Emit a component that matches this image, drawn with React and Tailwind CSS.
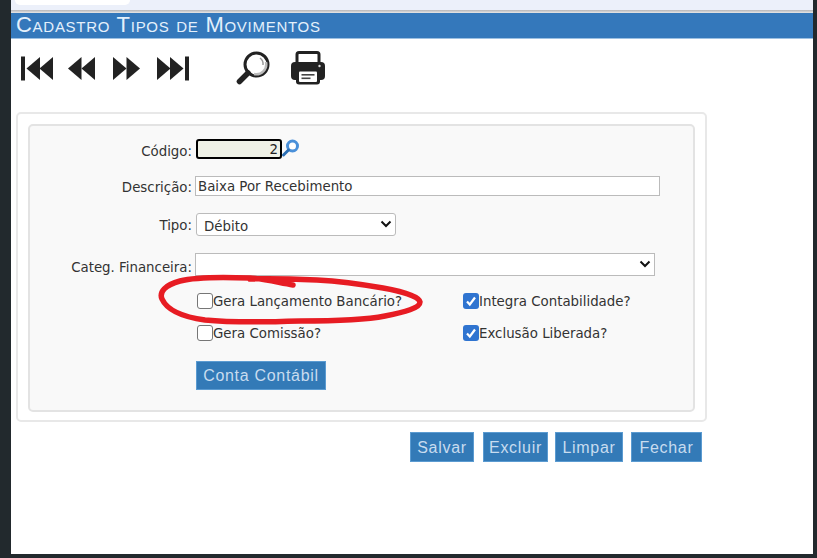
import React from "react";

const Tri = ({ x, dir }) => (
  <polygon points={dir > 0 ? `${x},1 ${x + 13.5},12.5 ${x},24` : `${x + 13.5},1 ${x},12.5 ${x + 13.5},24`} fill="#222" />
);

const Nav = ({ children, w }) => (
  <svg width={w} height="25" viewBox={`0 0 ${w} 25`}>{children}</svg>
);

const Row = ({ label, children, className, labelClass }) => (
  <div className={`flex items-center ${className}`}>
    <label className={`w-[165px] text-right pr-[3px] text-[#333] ${labelClass}`}>{label}</label>
    {children}
  </div>
);

const Box = ({ checked, label }) => (
  <label className="flex items-center h-[16px]">
    {checked ? (
      <span className="w-[16px] h-[16px] rounded-[3px] bg-[#2f74d0] flex items-center justify-center">
        <svg width="12" height="12" viewBox="0 0 12 12"><path d="M2 6.5 L4.8 9.5 L10 2.5" stroke="#fff" strokeWidth="2.2" fill="none" /></svg>
      </span>
    ) : (
      <span className="w-[16px] h-[16px] rounded-[3px] bg-white border border-[#767676]" />
    )}
    <span className="text-[#333] pt-[2px]">{label}</span>
  </label>
);

const Btn = ({ children, className }) => (
  <button className={`bg-[#337ab7] border border-[#5b9bd1] text-[#c8dcef] text-[16px] tracking-[0.7px] pt-[1px] font-['Liberation_Sans',sans-serif] ${className}`}>
    {children}
  </button>
);

const Chevron = () => (
  <svg className="absolute right-[3px] top-1/2 -translate-y-1/2" width="12" height="8" viewBox="0 0 12 8">
    <path d="M1.5 1.5 L6 6 L10.5 1.5" stroke="#111" strokeWidth="2" fill="none" />
  </svg>
);

export default function App() {
  return (
    <div className="relative w-[817px] h-[558px] overflow-hidden bg-[#22292d] pl-[11px] pr-[4px] pb-[4px] font-['DejaVu_Sans',sans-serif] text-[13.35px]">
      <div className="h-full bg-white flex flex-col">
        <div className="h-[10px] bg-[#ecf0fa] relative shrink-0">
          <div className="absolute left-[4px] top-0 w-[115px] h-[5px] bg-white rounded-b-[8px]" />
        </div>
        <div className="h-[3px] shrink-0 bg-gradient-to-b from-[#b5b5b8] to-[#e8e8e8]" />
        <div className="h-[26px] shrink-0 bg-[#3478bb] border-b border-[#9cc0e2] pl-[5px] text-[22px] tracking-[0.72px] leading-[24px] text-[#e4f0fb] font-['Liberation_Sans',sans-serif] [font-variant:small-caps] whitespace-nowrap">
          Cadastro Tipos de Movimentos
        </div>

        <div className="flex items-center h-[36px] mt-[11px] pl-[10px] shrink-0">
          <Nav w={32}>
            <rect x="0" y="0.5" width="4" height="24" fill="#222" />
            <Tri x={5.5} dir={-1} />
            <Tri x={18.5} dir={-1} />
          </Nav>
          <div className="w-[15px]" />
          <Nav w={27}>
            <Tri x={0} dir={-1} />
            <Tri x={13.5} dir={-1} />
          </Nav>
          <div className="w-[18px]" />
          <Nav w={27}>
            <Tri x={0} dir={1} />
            <Tri x={13.5} dir={1} />
          </Nav>
          <div className="w-[17px]" />
          <Nav w={32}>
            <Tri x={0} dir={1} />
            <Tri x={13} dir={1} />
            <rect x="28" y="0.5" width="4" height="24" fill="#222" />
          </Nav>
          <div className="w-[47px]" />
          <svg width="34" height="34" viewBox="0 0 34 34">
            <circle cx="20.5" cy="13.5" r="11.5" fill="#fff" stroke="#222" strokeWidth="3" />
            <path d="M18 23 A10 10 0 0 0 30 11" stroke="#bbb" strokeWidth="2.5" fill="none" />
            <path d="M24 7 A7.5 7.5 0 0 1 27 14" stroke="#999" strokeWidth="1.5" fill="none" />
            <path d="M12 22 L3.5 30.5" stroke="#222" strokeWidth="5.5" strokeLinecap="round" />
          </svg>
          <div className="w-[21px]" />
          <svg width="34" height="34" viewBox="0 0 34 34">
            <rect x="6" y="1.5" width="22" height="13" rx="2" fill="#fff" stroke="#222" strokeWidth="3" />
            <rect x="0" y="11" width="34" height="18" rx="4" fill="#222" />
            <circle cx="28.5" cy="15" r="1.2" fill="#ddd" />
            <rect x="5" y="18" width="24" height="15.5" rx="3" fill="#222" />
            <rect x="8" y="20.5" width="18" height="10.5" rx="1" fill="#fff" />
            <rect x="10.5" y="23" width="13" height="1.6" fill="#444" />
            <rect x="10.5" y="26.5" width="9" height="1.6" fill="#444" />
          </svg>
        </div>

        <div className="ml-[5px] mt-[26px] w-[691px] h-[310px] shrink-0 rounded-[5px] border-2 border-[#e8e8e8] p-[10px]">
          <div className="relative h-[288px] rounded-[5px] border-2 border-[#e3e3e3] bg-[#f9f9f9]">
            <Row label="Código:" className="pt-[13px] h-[33px]" labelClass="pt-[5px]">
              <input readOnly value="2" className="w-[86px] h-[20px] ml-[1px] rounded-[3px] border-2 border-black bg-[#eff1e6] text-right pr-[2px] pt-[2px] text-[#222]" />
              <svg width="20" height="20" viewBox="0 0 20 20" className="-mt-[3px] -ml-[1px]">
                <circle cx="11.5" cy="8" r="5" fill="#fff" stroke="#4a90d9" strokeWidth="3" />
                <path d="M7.5 12 L2.5 17" stroke="#2c6fb5" strokeWidth="3" strokeLinecap="round" />
              </svg>
            </Row>
            <Row label="Descrição:" className="mt-[17px] h-[20px]" labelClass="pt-[4px]">
              <input readOnly value="Baixa Por Recebimento" className="w-[465px] h-[20px] border border-[#bbb] bg-white px-[2px] pt-[2px] text-[#333]" />
            </Row>
            <Row label="Tipo:" className="mt-[16px] h-[24px]" labelClass="pt-[4px]">
              <div className="relative w-[200px] h-[23px] ml-[1px] rounded-[3px] border border-[#bbb] bg-white pl-[7px] pt-[2px] leading-[21px] text-[#333]">
                Débito
                <Chevron />
              </div>
            </Row>
            <Row label="Categ. Financeira:" className="mt-[16px] h-[24px]" labelClass="pt-[8px]">
              <div className="relative w-[460px] h-[23px] border border-[#bbb] bg-white">
                <Chevron />
              </div>
            </Row>
            <div className="flex mt-[17px] ml-[167px]">
              <div className="w-[266px]"><Box label="Gera Lançamento Bancário?" /></div>
              <Box checked label="Integra Contabilidade?" />
            </div>
            <div className="flex mt-[16px] ml-[167px]">
              <div className="w-[266px]"><Box label="Gera Comissão?" /></div>
              <Box checked label="Exclusão Liberada?" />
            </div>
            <Btn className="block mt-[20px] ml-[166px] w-[130px] h-[29px]">Conta Contábil</Btn>
          </div>
        </div>

        <div className="flex ml-[399px] mt-[10px]">
          <Btn className="w-[64px] h-[30px]">Salvar</Btn>
          <Btn className="w-[65px] h-[30px] ml-[9px]">Excluir</Btn>
          <Btn className="w-[68px] h-[30px] ml-[7px]">Limpar</Btn>
          <Btn className="w-[71px] h-[30px] ml-[8px]">Fechar</Btn>
        </div>
      </div>

      <svg className="absolute left-0 top-0 pointer-events-none" width="817" height="558" viewBox="0 0 817 558">
        <path
          d="M293 285 C280 283 265 279 250 278 C225 277 195 277 180 281 C165 285 159 292 162 299 C167 310 183 317 205 320 C235 323 270 322 300 321 C335 321 365 320 385 316 C405 312 420 308 420 302 C419 296 400 291 383 288 C360 284 335 281 317 280 C295 279 270 278 250 279"
          fill="none"
          stroke="#e71c23"
          strokeWidth="5.5"
          strokeLinecap="round"
        />
      </svg>
    </div>
  );
}
